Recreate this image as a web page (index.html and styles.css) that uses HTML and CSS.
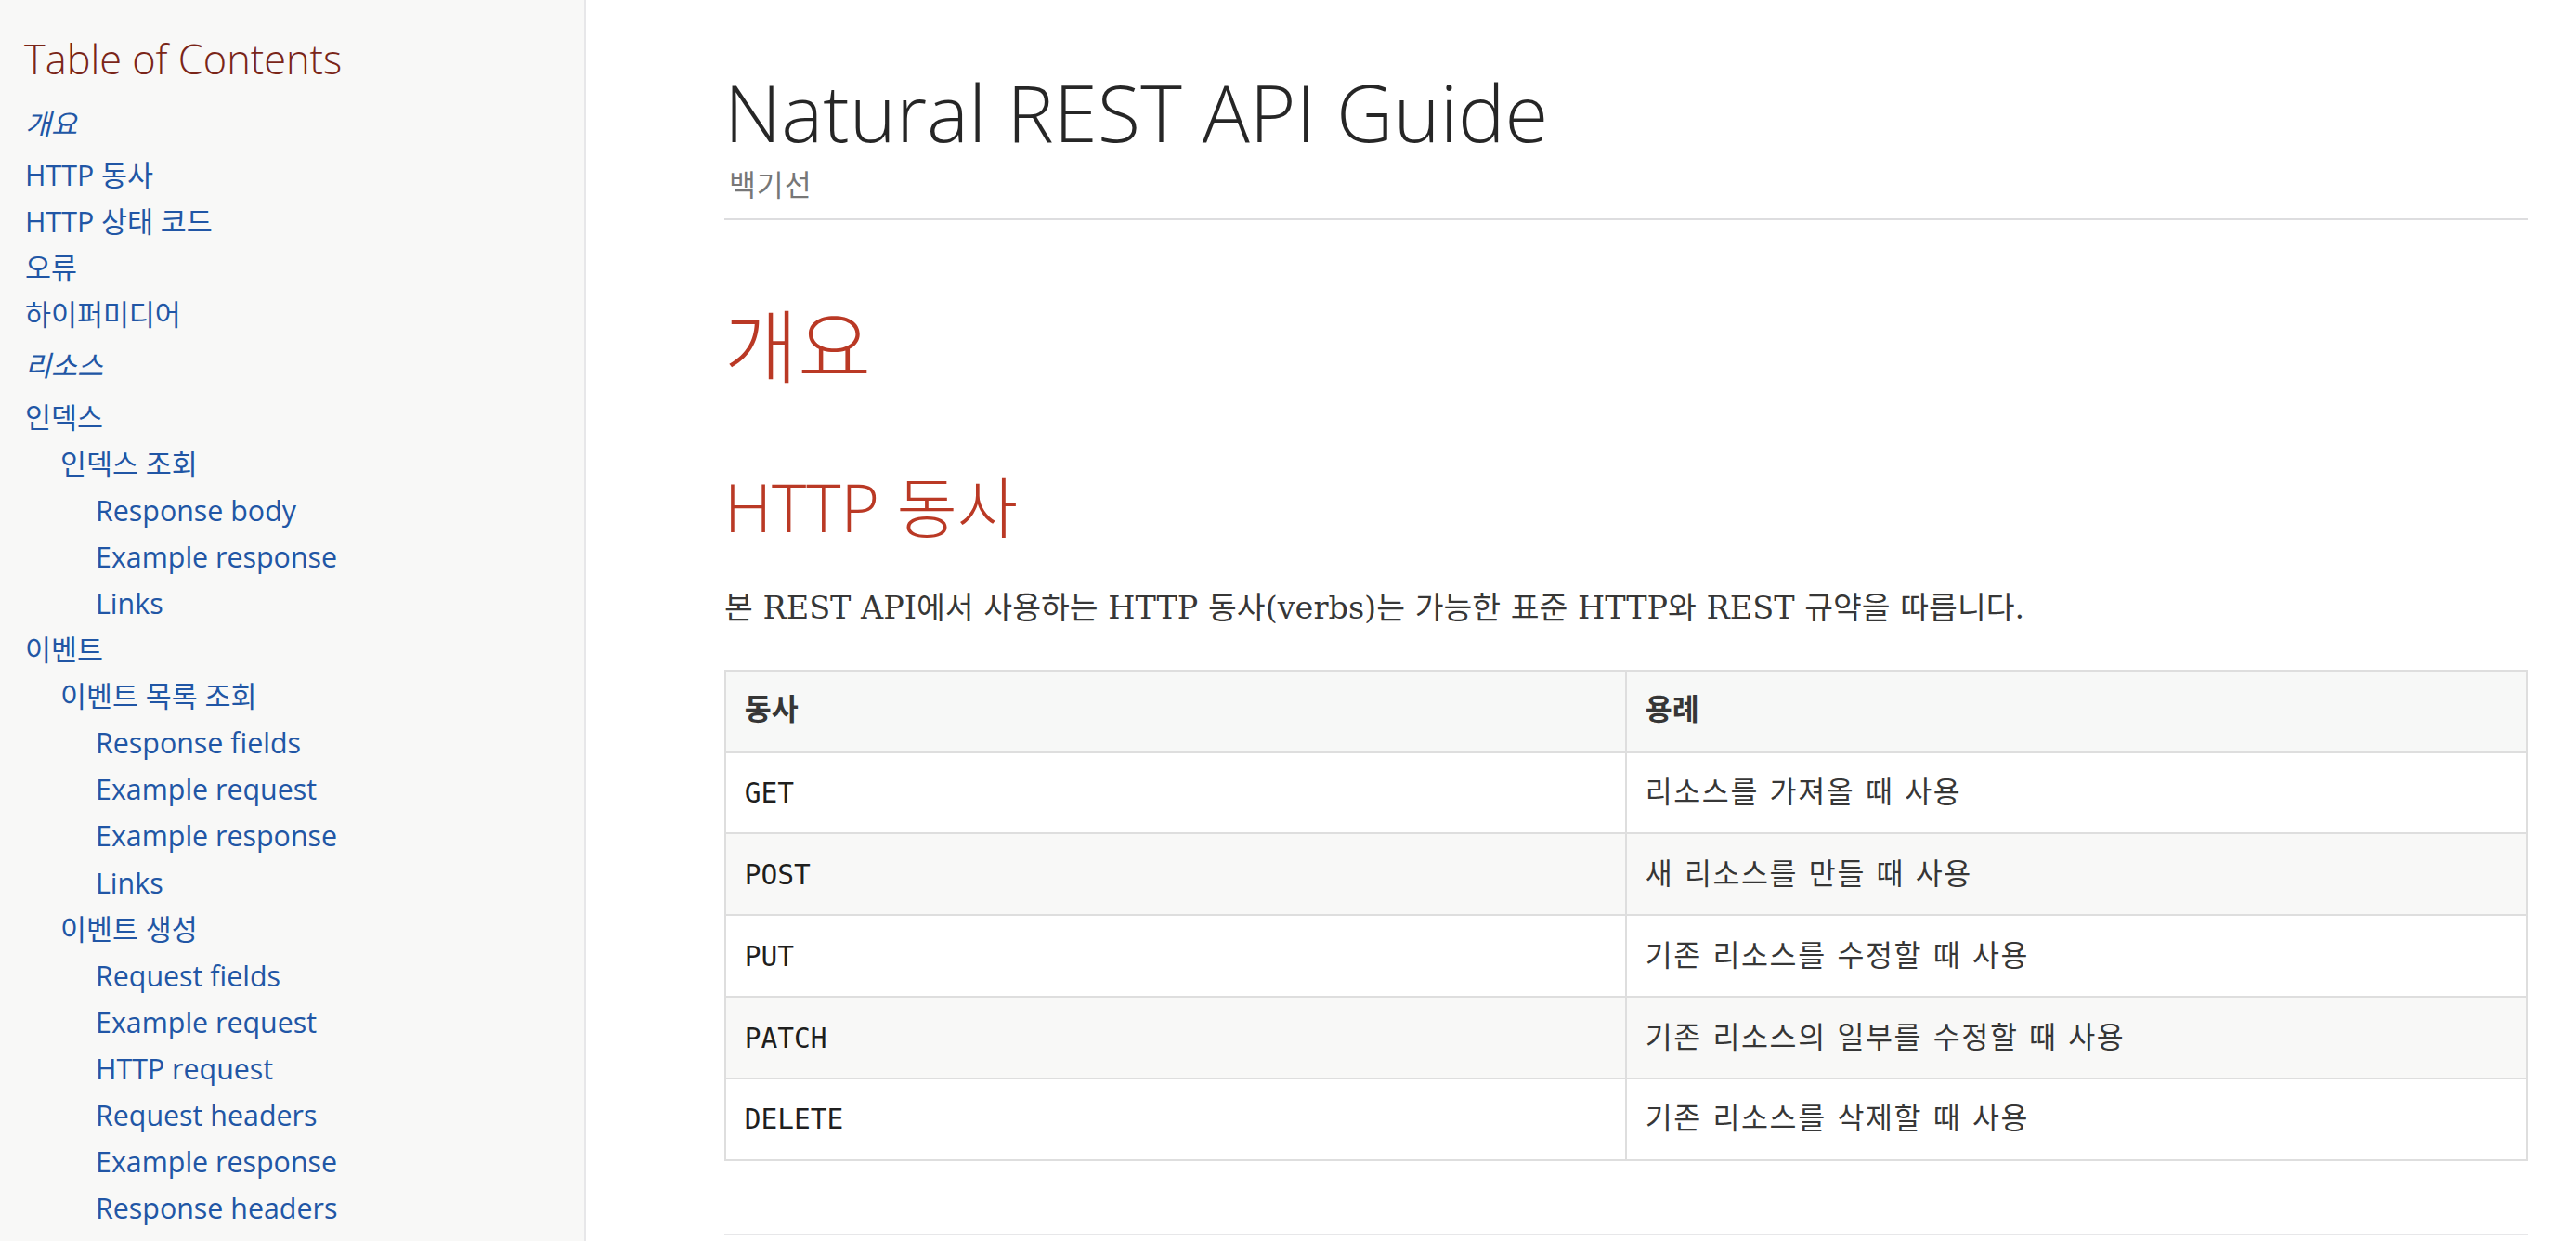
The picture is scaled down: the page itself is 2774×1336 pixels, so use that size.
FILE: index.html
```html
<!DOCTYPE html>
<html lang="ko">
<head>
<meta charset="utf-8">
<title>Natural REST API Guide</title>
<link rel="stylesheet" href="styles.css">
</head>
<body>
<div class="page">
  <nav class="toc">
    <div class="toc-title">Table of Contents</div>
    <ul class="lvl0">
      <li><a class="part">개요</a>
        <ul class="lvl1">
          <li><a>HTTP 동사</a></li>
          <li><a>HTTP 상태 코드</a></li>
          <li><a>오류</a></li>
          <li><a>하이퍼미디어</a></li>
        </ul>
      </li>
      <li><a class="part">리소스</a>
        <ul class="lvl1">
          <li><a>인덱스</a>
            <ul class="sub">
              <li><a>인덱스 조회</a>
                <ul class="sub">
                  <li><a>Response body</a></li>
                  <li><a>Example response</a></li>
                  <li><a>Links</a></li>
                </ul>
              </li>
            </ul>
          </li>
          <li><a>이벤트</a>
            <ul class="sub">
              <li><a>이벤트 목록 조회</a>
                <ul class="sub">
                  <li><a>Response fields</a></li>
                  <li><a>Example request</a></li>
                  <li><a>Example response</a></li>
                  <li><a>Links</a></li>
                </ul>
              </li>
              <li><a>이벤트 생성</a>
                <ul class="sub">
                  <li><a>Request fields</a></li>
                  <li><a>Example request</a></li>
                  <li><a>HTTP request</a></li>
                  <li><a>Request headers</a></li>
                  <li><a>Example response</a></li>
                  <li><a>Response headers</a></li>
                </ul>
              </li>
            </ul>
          </li>
        </ul>
      </li>
    </ul>
  </nav>
  <main class="main">
    <header class="doc-header">
      <h1 class="doc-title">Natural REST API Guide</h1>
      <div class="details"><span class="author">백기선</span></div>
    </header>
    <div class="content">
      <h1 class="part-title">개요</h1>
      <section class="sect1">
        <h2 class="sect-title">HTTP 동사</h2>
        <p class="para">본 REST API에서 사용하는 HTTP 동사(verbs)는 가능한 표준 HTTP와 REST 규약을 따릅니다.</p>
        <table class="tbl">
          <colgroup><col class="half"><col class="half"></colgroup>
          <thead>
            <tr><th>동사</th><th>용례</th></tr>
          </thead>
          <tbody>
            <tr><td><code>GET</code></td><td class="ko">리소스를 가져올 때 사용</td></tr>
            <tr class="even"><td><code>POST</code></td><td class="ko">새 리소스를 만들 때 사용</td></tr>
            <tr><td><code>PUT</code></td><td class="ko">기존 리소스를 수정할 때 사용</td></tr>
            <tr class="even"><td><code>PATCH</code></td><td class="ko">기존 리소스의 일부를 수정할 때 사용</td></tr>
            <tr><td><code>DELETE</code></td><td class="ko">기존 리소스를 삭제할 때 사용</td></tr>
          </tbody>
        </table>
      </section>
      <section class="sect1 next"></section>
    </div>
  </main>
</div>
</body>
</html>
```

FILE: styles.css
```css
html, body {
  margin: 0;
  padding: 0;
  background: #fff;
}

body {
  font-family: "DejaVu Serif", "Noto Sans CJK KR", serif;
  color: rgba(0, 0, 0, 0.8);
  font-size: 31.5px;
  line-height: 1;
}

.page {
  display: flex;
  height: 1336px;
  overflow: hidden;
}

/* ---------- TOC sidebar ---------- */
.toc {
  flex: 0 0 631px;
  box-sizing: border-box;
  width: 631px;
  height: 1336px;
  overflow: hidden;
  background: #f8f8f7;
  border-right: 2px solid #e7e7e9;
  padding: 42px 24px 0 26px;
  font-family: "Open Sans", "Noto Sans CJK KR", sans-serif;
}

.toc-title {
  font-family: "Open Sans", "Noto Sans CJK KR", sans-serif;
  font-weight: 300;
  color: #7a2518;
  font-size: 43.3px;
  line-height: 43.8px;
  margin: 0 0 28px 0;
}

.toc ul {
  list-style: none;
  margin: 0;
  padding: 0;
}

.toc .lvl0 {
  font-size: 30.4px;
  padding-left: 1px;
}

.toc li {
  line-height: 40px;
  margin-top: 10.1px;
}

.toc .lvl1 {
  margin: 15.2px 0;
}

.toc .sub {
  padding-left: 38px;
}

.toc a {
  color: #2156a5;
  text-decoration: none;
}

.toc a.part {
  font-style: italic;
}

/* ---------- main ---------- */
.main {
  flex: 1 1 auto;
  min-width: 0;
  padding: 0 52px 0 149px;
}

.doc-title {
  font-family: "Open Sans", "Noto Sans CJK KR", sans-serif;
  font-weight: 300;
  color: rgba(0, 0, 0, 0.85);
  font-size: 85px;
  line-height: 88px;
  margin: 76px 0 0 0;
}

.details {
  display: flex;
  border-bottom: 2px solid #dddddf;
  line-height: 1.45;
  padding: 14px 0 11px 7.9px;
  color: rgba(0, 0, 0, 0.55);
}

.author {
  margin-left: -3px;
  letter-spacing: 1px;
}

.content {
  padding-top: 1px;
}

.part-title,
.sect-title {
  font-family: "Open Sans", "Noto Sans CJK KR Light", "Noto Sans CJK KR", sans-serif;
  font-weight: 300;
  color: #ba3925;
}

.part-title {
  font-size: 86px;
  line-height: 88px;
  margin: 91px 0 0 0;
}

.sect1 {
  padding-bottom: 39.4px;
}

.sect-title {
  font-size: 71px;
  line-height: 73.7px;
  margin: 92px 0 45.5px 0;
}

.sect1.next {
  border-top: 2px solid #e7e7e9;
}

.para {
  font-size: 33.5px;
  line-height: 1.6;
  margin: 0 0 39.4px 0;
}

.tbl {
  width: 100%;
  border-collapse: collapse;
  border: 2px solid #dedede;
  margin-bottom: 39.4px;
  background: #fff;
}

.tbl .half {
  width: 50%;
}

.tbl th,
.tbl td {
  border: 2px solid #dedede;
  text-align: left;
  line-height: 1.6;
  color: rgba(0, 0, 0, 0.8);
  font-size: 31.5px;
}

.tbl thead {
  background: #f7f8f7;
}

.tbl th {
  padding: 15.75px 19.7px 19.7px;
  font-weight: bold;
}

.tbl td {
  padding: 17.7px 19.7px;
}

.tbl td.ko {
  letter-spacing: 1.6px;
}

.tbl tr.even {
  background: #f8f8f7;
}

.tbl code {
  font-family: "DejaVu Sans Mono", monospace;
  font-size: 0.9375em;
  color: rgba(0, 0, 0, 0.9);
}
```
